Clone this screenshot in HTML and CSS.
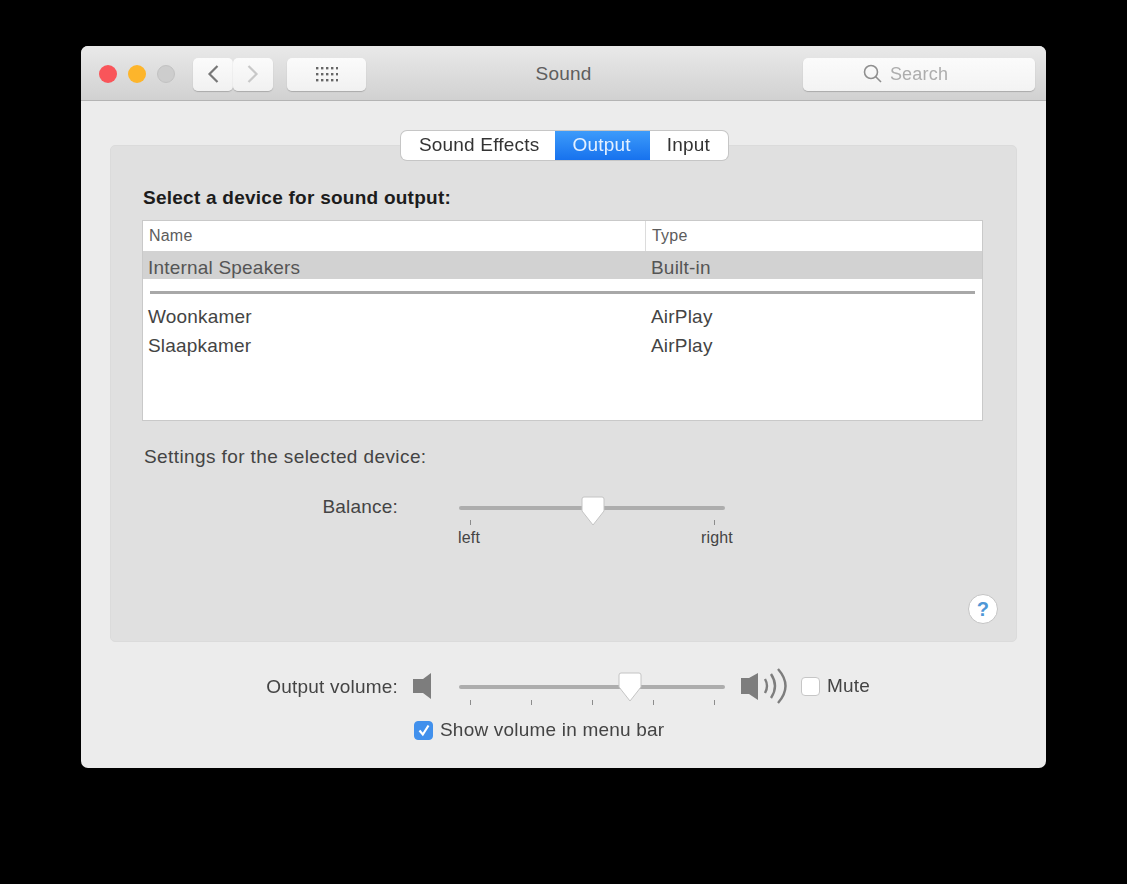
FILE: index.html
```html
<!DOCTYPE html>
<html lang="en">
<head>
  <meta charset="UTF-8">
  <title>Sound</title>
  <link rel="stylesheet" href="styles.css">
</head>
<body>
  <div class="window">
    <div class="titlebar">
      <div class="titlebar__left">
        <div class="lights">
          <span class="light light--red"></span>
          <span class="light light--yellow"></span>
          <span class="light light--off"></span>
        </div>
        <div class="nav">
          <div class="btn btn--nav">
            <svg width="14" height="22" viewBox="0 0 14 22"><path d="M11.5 3 L3.5 11 L11.5 19" fill="none" stroke="#777" stroke-width="2.2"/></svg>
          </div>
          <div class="btn btn--nav">
            <svg width="14" height="22" viewBox="0 0 14 22"><path d="M2.5 3 L10.5 11 L2.5 19" fill="none" stroke="#c8c8c8" stroke-width="2.2"/></svg>
          </div>
        </div>
        <div class="btn btn--grid">
          <svg width="22" height="16" viewBox="0 0 22 16" fill="#666">
            <rect x="0" y="1" width="2.4" height="2.4"/><rect x="5" y="1" width="2.4" height="2.4"/><rect x="10" y="1" width="2.4" height="2.4"/><rect x="15" y="1" width="2.4" height="2.4"/><rect x="20" y="1" width="2.4" height="2.4"/>
            <rect x="0" y="7" width="2.4" height="2.4"/><rect x="5" y="7" width="2.4" height="2.4"/><rect x="10" y="7" width="2.4" height="2.4"/><rect x="15" y="7" width="2.4" height="2.4"/><rect x="20" y="7" width="2.4" height="2.4"/>
            <rect x="0" y="13" width="2.4" height="2.4"/><rect x="5" y="13" width="2.4" height="2.4"/><rect x="10" y="13" width="2.4" height="2.4"/><rect x="15" y="13" width="2.4" height="2.4"/><rect x="20" y="13" width="2.4" height="2.4"/>
          </svg>
        </div>
      </div>
      <div class="titlebar__title">Sound</div>
      <div class="search">
        <svg width="20" height="20" viewBox="0 0 20 20" fill="none" stroke="#8f8f8f" stroke-width="1.6"><circle cx="8" cy="8" r="6.5"/><path d="M12.5 12.5 L18 18"/></svg>
        <span>Search</span>
      </div>
    </div>

    <div class="content">
      <div class="tabs">
        <div class="tab tab--effects">Sound Effects</div>
        <div class="tab tab--active">Output</div>
        <div class="tab tab--input">Input</div>
      </div>

      <div class="panel">
        <h2 class="panel__title">Select a device for sound output:</h2>
        <div class="devices">
          <div class="devices__head">
            <div class="devices__col">Name</div>
            <div class="devices__col devices__col--type">Type</div>
          </div>
          <div class="device device--selected"><span>Internal Speakers</span><span>Built-in</span></div>
          <div class="devices__sep"></div>
          <div class="device"><span>Woonkamer</span><span>AirPlay</span></div>
          <div class="device"><span>Slaapkamer</span><span>AirPlay</span></div>
        </div>

        <div class="settings">Settings for the selected device:</div>

        <div class="balance">
          <div class="row__label">Balance:</div>
          <div class="slider">
            <div class="slider__track"></div>
            <div class="slider__knob slider__knob--balance">
              <svg width="24" height="30" viewBox="0 0 24 30"><path d="M3 1 H21 Q23 1 23 3 V15 L12 29 L1 15 V3 Q1 1 3 1 Z" fill="#fff" stroke="#c4c4c4"/></svg>
            </div>
            <div class="ticks"><i></i><i></i></div>
            <div class="slider__ends"><span>left</span><span>right</span></div>
          </div>
        </div>

        <div class="help">?</div>
      </div>

      <div class="volume">
        <div class="row__label">Output volume:</div>
        <svg class="speaker" width="20" height="26" viewBox="0 0 20 26"><path d="M0 6 H10 L18 0 V26 L10 20 H0 Z" fill="#7d7d7d"/></svg>
        <div class="slider slider--volume">
          <div class="slider__track"></div>
          <div class="slider__knob slider__knob--volume">
            <svg width="24" height="30" viewBox="0 0 24 30"><path d="M3 1 H21 Q23 1 23 3 V15 L12 29 L1 15 V3 Q1 1 3 1 Z" fill="#fff" stroke="#c4c4c4"/></svg>
          </div>
          <div class="ticks"><i></i><i></i><i></i><i></i><i></i></div>
        </div>
        <svg class="speaker speaker--loud" width="46" height="36" viewBox="0 0 46 36">
          <path d="M0 10 H8 L17 5 V32 L8 26 H0 Z" fill="#7d7d7d"/>
          <g fill="none" stroke="#7d7d7d" stroke-width="2.4">
            <path d="M24 11 Q28 18 24 25"/>
            <path d="M30 6 Q38 18 30 30"/>
            <path d="M37 1 Q52 18 37 35"/>
          </g>
        </svg>
        <div class="check"></div>
        <span class="check__label">Mute</span>
      </div>

      <div class="menubar-option">
        <div class="check check--on">
          <svg width="14" height="14" viewBox="0 0 14 14"><path d="M2.5 7.5 L5.8 11.5 L11.5 2.5" fill="none" stroke="#fff" stroke-width="2.2"/></svg>
        </div>
        <span class="check__label">Show volume in menu bar</span>
      </div>
    </div>
  </div>
</body>
</html>
```

FILE: styles.css
```css
* {
  box-sizing: border-box;
}

body {
  margin: 0;
  height: 884px;
  padding: 46px 0 0 81px;
  background: #000;
  font-family: "Liberation Sans", Arial, sans-serif;
  font-size: 19px;
  letter-spacing: 0.2px;
  color: #444;
  overflow: hidden;
}

.window {
  width: 965px;
  height: 722px;
  background: #ececec;
  border-radius: 7px;
  overflow: hidden;
  filter: blur(0.5px);
}

.titlebar {
  display: grid;
  grid-template-columns: 1fr auto 1fr;
  align-items: center;
  height: 55px;
  padding: 2px 11px 0;
  background: linear-gradient(#e9e9e9, #d1d1d1);
  border-bottom: 1px solid #b4b4b4;
}

.titlebar__left {
  display: flex;
  align-items: center;
}

.titlebar__title {
  color: #5e5e5e;
}

.lights {
  display: flex;
  gap: 11px;
  margin: 0 18px 0 7px;
}

.light {
  width: 18px;
  height: 18px;
  border-radius: 50%;
}
.light--red {
  background: #f9555a;
}
.light--yellow {
  background: #fdb52b;
}
.light--off {
  background: #cdcdcd;
  border: 1px solid #c2c2c2;
}

.btn {
  display: flex;
  align-items: center;
  justify-content: center;
  height: 33px;
  background: linear-gradient(#fbfbfb, #f1f1f1);
  border-radius: 5px;
  box-shadow: 0 1px 1px #aaa;
}
.btn--nav {
  width: 40px;
}

.nav {
  display: flex;
}

.btn--grid {
  width: 79px;
  margin-left: 14px;
}

.search {
  justify-self: end;
  display: flex;
  align-items: center;
  justify-content: center;
  gap: 7px;
  width: 232px;
  height: 33px;
  padding-right: 27px;
  background: linear-gradient(#fbfbfb, #f3f3f3);
  border-radius: 5px;
  box-shadow: 0 1px 1px #aaa;
  font-size: 18px;
  color: #adadad;
}

.content {
  padding: 30px 29px 0;
}

.tabs {
  position: relative;
  z-index: 1;
  display: flex;
  width: fit-content;
  height: 29px;
  margin: 0 289px -15px auto;
  background: #fff;
  border-radius: 6px;
  box-shadow: 0 0 0 1px #c6c6c6;
  overflow: hidden;
  color: #333;
}

.tab {
  line-height: 28px;
}
.tab--effects {
  padding: 0 16px 0 18px;
}
.tab--active {
  padding: 0 19px 0 17px;
  background: linear-gradient(#3d9bfa, #1772ee);
  color: #e4f0ff;
}
.tab--input {
  padding: 0 18px 0 17px;
}

.panel {
  position: relative;
  height: 497px;
  padding: 41px 33px 0 31px;
  background: #e0e0e0;
  border: 1px solid #dbdbdb;
  border-radius: 5px;
}

.panel__title {
  margin: 0 0 12px 1px;
  font-size: 19px;
  line-height: 21px;
  font-weight: bold;
  letter-spacing: 0.25px;
  color: #1c1c1c;
}

.devices {
  height: 201px;
  background: #fff;
  border: 1px solid #c9c9c9;
}

.devices__head {
  display: grid;
  grid-template-columns: 502px 1fr;
  height: 30px;
  font-size: 16px;
  line-height: 30px;
  color: #5c5c5c;
}

.devices__col {
  padding-left: 6px;
}
.devices__col--type {
  border-left: 1px solid #dcdcdc;
}

.device {
  display: grid;
  grid-template-columns: 503px 1fr;
  height: 29px;
  padding-left: 5px;
  line-height: 29px;
}
.device--selected {
  background: #d2d2d2;
  height: 28px;
  line-height: 34px;
  color: #555;
}

.devices__sep {
  height: 3px;
  margin: 12px 7px 8px;
  background: #a8a8a8;
}

.settings {
  margin-top: 25px;
  margin-left: 2px;
  line-height: 21px;
  letter-spacing: 0.4px;
}

.balance {
  display: flex;
  margin-top: 29px;
}

.row__label {
  width: 256px;
  text-align: right;
  line-height: 21px;
  flex: none;
}

.slider {
  position: relative;
  width: 266px;
  margin-left: 61px;
  padding-top: 10px;
}

.slider__track {
  height: 4px;
  background: #adadad;
  border-radius: 2px;
}

.slider__knob {
  position: absolute;
  top: 0;
  line-height: 0;
}
.slider__knob--balance {
  left: 122px;
}
.slider__knob--volume {
  left: 159px;
}

.ticks {
  display: flex;
  justify-content: space-between;
  padding: 0 10px 0 11px;
  margin-top: 10px;
}
.ticks i {
  width: 1px;
  height: 5px;
  background: #8c8c8c;
}

.slider__ends {
  display: flex;
  justify-content: space-between;
  margin: 3px -8px 0 -1px;
  font-size: 16px;
  line-height: 20px;
}

.help {
  position: absolute;
  right: 18px;
  bottom: 17px;
  width: 30px;
  height: 30px;
  background: #fff;
  border: 1px solid #c4c4c4;
  border-radius: 50%;
  text-align: center;
  font-weight: bold;
  font-size: 20px;
  line-height: 28px;
  color: #4f97d6;
}

.volume {
  display: flex;
  align-items: center;
  height: 40px;
  margin-top: 24px;
  margin-left: -29px;
}
.volume .row__label {
  width: 317px;
}

.speaker {
  flex: none;
  margin-left: 15px;
}
.slider--volume {
  margin: 2px 0 0 26px;
  padding-top: 0;
}
.slider--volume .slider__knob {
  top: -13px;
}
.slider--volume .ticks {
  position: absolute;
  left: 0;
  right: 0;
  top: 15px;
  margin: 0;
}
.speaker--loud {
  margin-left: 16px;
}

.check {
  flex: none;
  display: flex;
  align-items: center;
  justify-content: center;
  width: 19px;
  height: 19px;
  margin-left: 14px;
  background: #fff;
  border: 1px solid #c6c6c6;
  border-radius: 4px;
}
.check--on {
  margin-left: 0;
  background: #4190ec;
  border-color: #4190ec;
}
.check__label {
  margin-left: 7px;
}

.menubar-option {
  display: flex;
  align-items: center;
  margin-top: 13px;
  margin-left: 304px;
}
```
